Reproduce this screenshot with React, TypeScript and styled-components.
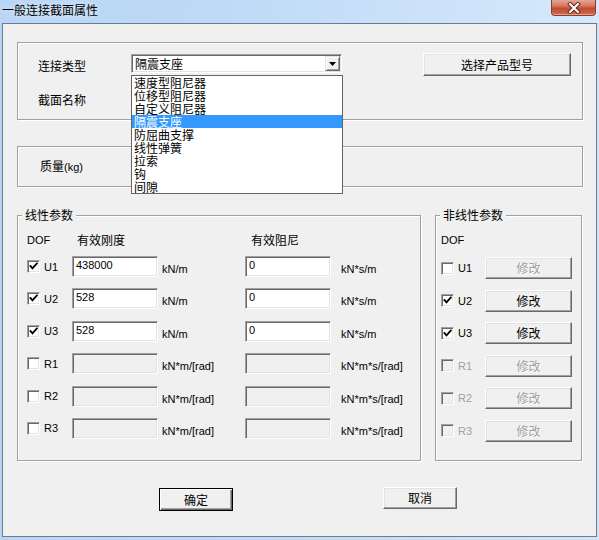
import React from 'react';
import styled, { createGlobalStyle } from 'styled-components';

const CJK = `"Noto Sans CJK SC", "Liberation Sans", sans-serif`;
const LAT = `"Liberation Sans", "Noto Sans CJK SC", sans-serif`;

const GlobalStyle = createGlobalStyle`
  html, body { margin: 0; padding: 0; background: #c3d9f1; }
  body { font-family: ${CJK}; }
`;

const Window = styled.div`
  width: 599px;
  height: 540px;
  display: flex;
  flex-direction: column;
  overflow: hidden;
  background: linear-gradient(90deg, #bad5f3 0%, #c6dcf5 55%, #d2e4f8 100%);
`;

const TitleBar = styled.div`
  height: 23px;
  flex: none;
  display: flex;
  align-items: flex-start;
  justify-content: space-between;
  background: linear-gradient(100deg, #b9d6f6 0%, #bed9f7 35%, #cfe4fa 80%, #d6e8fb 100%);
`;

const Title = styled.div`
  font: 12px/20px ${CJK};
  color: #000;
  padding-left: 2px;
  text-shadow: 0 0 6px rgba(255, 255, 255, 0.9);
`;

const CloseButton = styled.div`
  width: 45px;
  height: 16px;
  margin-right: 3px;
  box-sizing: border-box;
  border: 1px solid #8b3b2d;
  border-top: none;
  border-radius: 0 0 4px 4px;
  background: linear-gradient(180deg, #e6a595 0%, #d7765f 40%, #c24a30 55%, #cf6a4f 100%);
  box-shadow: inset 0 -1px 0 rgba(255, 200, 180, 0.6);
  display: flex;
  align-items: center;
  justify-content: center;
`;

const Client = styled.div`
  margin: 0 2px 3px 2px;
  flex: 1;
  border: 1px solid #6b7c8f;
  background: #f0f0f0;
  display: flex;
  flex-direction: column;
  padding-left: 14px;
  box-sizing: border-box;
`;

const Frame = styled.div<{ $w: number; $h: number; $mt: number }>`
  width: ${(p) => p.$w}px;
  height: ${(p) => p.$h}px;
  margin-top: ${(p) => p.$mt}px;
  box-sizing: border-box;
  border: 1px solid #a0a0a0;
  box-shadow: inset 1px 1px 0 #fff, 1px 1px 0 #fff;
  flex: none;
`;

const SectionFrame = styled(Frame)`
  display: flex;
  flex-direction: column;
  padding: 10px 11px 0 20px;
`;

const MassFrame = styled(Frame)`
  display: flex;
  align-items: center;
  padding-left: 22px;
  padding-bottom: 1px;
`;

const ParamFrame = styled(Frame)`
  display: flex;
  flex-direction: column;
`;

const Legend = styled.div<{ $pl: number }>`
  margin: -9px 0 0 4px;
  padding: 0 3px;
  width: fit-content;
  background: #f0f0f0;
  font: 12px/16px ${CJK};
  color: #000;
`;

const TopRow = styled.div`
  display: flex;
  align-items: flex-start;
`;

const FieldLabel = styled.div<{ $mt: number }>`
  width: 93px;
  margin-top: ${(p) => p.$mt}px;
  font: 12px/16px ${CJK};
  color: #000;
`;

const Small = styled.span`
  font: 11px ${LAT};
`;

const ComboWrap = styled.div`
  position: relative;
  width: 211px;
  height: 19px;
  margin-top: 1px;
`;

const Combo = styled.div`
  width: 100%;
  height: 100%;
  box-sizing: border-box;
  background: #fff;
  border: 1px solid;
  border-color: #a0a0a0 #fff #fff #a0a0a0;
  box-shadow: inset 1px 1px 0 #696969, inset -1px -1px 0 #e3e3e3;
  display: flex;
  align-items: center;
  justify-content: space-between;
  padding: 1px;
`;

const ComboText = styled.div`
  font: 12px/15px ${CJK};
  color: #000;
  padding-left: 2px;
`;

const ComboArrow = styled.div`
  width: 15px;
  height: 15px;
  box-sizing: border-box;
  background: #f0f0f0;
  border: 1px solid;
  border-color: #e3e3e3 #696969 #696969 #e3e3e3;
  box-shadow: inset 1px 1px 0 #fff, inset -1px -1px 0 #a0a0a0;
  display: flex;
  align-items: center;
  justify-content: center;
`;

const DropList = styled.div`
  position: absolute;
  left: 0;
  top: 21px;
  width: 212px;
  box-sizing: border-box;
  border: 1px solid #646464;
  background: #fff;
  z-index: 10;
`;

const DropItem = styled.div<{ $sel?: boolean }>`
  height: 13px;
  font: 12px/13px ${CJK};
  padding-left: 2px;
  white-space: nowrap;
  overflow: visible;
  color: ${(p) => (p.$sel ? '#fff' : '#000')};
  background: ${(p) => (p.$sel ? '#3399ff' : 'transparent')};
`;

const Spacer = styled.div`
  flex: 1;
`;

const PushButton = styled.div<{ $w: number; $h: number; $disabled?: boolean; $default?: boolean }>`
  width: ${(p) => p.$w}px;
  height: ${(p) => p.$h}px;
  box-sizing: border-box;
  background: #f0f0f0;
  border: 1px solid;
  border-color: ${(p) => (p.$default ? '#000' : '#fff #696969 #696969 #fff')};
  box-shadow: ${(p) =>
    p.$default
      ? 'inset 1px 1px 0 #fff, inset -1px -1px 0 #696969, inset -2px -2px 0 #a0a0a0'
      : 'inset -1px -1px 0 #a0a0a0, inset 1px 1px 0 #e3e3e3'};
  display: flex;
  align-items: center;
  justify-content: center;
  font: 12px/16px ${CJK};
  color: ${(p) => (p.$disabled ? '#a0a0a0' : '#000')};
  text-shadow: ${(p) => (p.$disabled ? '1px 1px 0 #fff' : 'none')};
  flex: none;
`;

const GroupsRow = styled.div`
  display: flex;
  gap: 14px;
  margin-top: 28px;
`;

const LIN_COLS = '17px 28px 86px 87px 86px auto';
const NL_COLS = '17px 27px 87px';

const HeaderGrid = styled.div<{ $cols: string }>`
  display: grid;
  grid-template-columns: ${(p) => p.$cols};
  margin-top: 9px;
  height: 16px;
  align-items: center;
`;

const HeadCell = styled.div<{ $span?: number; $pl?: number; $col?: number }>`
  grid-column: ${(p) => (p.$col ? `${p.$col} / span ${p.$span || 1}` : `span ${p.$span || 1}`)};
  padding-left: ${(p) => p.$pl || 0}px;
  font: 12px/16px ${CJK};
  color: #000;
  white-space: nowrap;
`;

const DofHead = styled(HeadCell)`
  font: 11px/16px ${LAT};
`;

const RowsGrid = styled.div<{ $cols: string; $rh: number; $gap: number; $mt: number }>`
  display: grid;
  grid-template-columns: ${(p) => p.$cols};
  grid-auto-rows: ${(p) => p.$rh}px;
  row-gap: ${(p) => p.$gap}px;
  margin-top: ${(p) => p.$mt}px;
  align-items: center;
`;

const LinBody = styled.div`
  padding-left: 9px;
`;

const NlBody = styled.div`
  padding-left: 5px;
`;

const CheckBox = styled.div<{ $disabled?: boolean }>`
  width: 13px;
  height: 13px;
  box-sizing: border-box;
  border: 1px solid;
  border-color: #a0a0a0 #fff #fff #a0a0a0;
  box-shadow: inset 1px 1px 0 #696969, inset -1px -1px 0 #e3e3e3;
  background: ${(p) => (p.$disabled ? '#f0f0f0' : '#fff')};
  display: flex;
  align-items: center;
  justify-content: center;
`;

const DofLabel = styled.div<{ $disabled?: boolean }>`
  font: 11px/14px ${LAT};
  color: ${(p) => (p.$disabled ? '#a0a0a0' : '#000')};
  padding-left: 0px;
`;

const TextBox = styled.div<{ $disabled?: boolean }>`
  width: 86px;
  height: 21px;
  box-sizing: border-box;
  border: 1px solid;
  border-color: #a0a0a0 #fff #fff #a0a0a0;
  box-shadow: inset 1px 1px 0 #696969, inset -1px -1px 0 #e3e3e3;
  background: ${(p) => (p.$disabled ? '#f0f0f0' : '#fff')};
  font: 11px/15px ${LAT};
  color: #000;
  padding: 1px 0 0 3px;
`;

const Unit = styled.div<{ $pl: number }>`
  padding-left: ${(p) => p.$pl}px;
  margin-top: 5px;
  font: 11px/14px ${LAT};
  color: #000;
  white-space: nowrap;
`;

const BottomRow = styled.div`
  display: flex;
  align-items: flex-start;
  margin-top: 26px;
  padding-left: 142px;
  gap: 150px;
`;

const DefaultWrap = styled.div`
  margin-top: 1px;
`;

const CheckMark = () => (
  <svg width="9" height="9" viewBox="0 0 9 9">
    <polyline points="1.5,4 3.5,6.3 7.8,1.5" fill="none" stroke="#000" strokeWidth="1.9" strokeLinecap="square" />
  </svg>
);

const CloseGlyph = () => (
  <svg width="14" height="12" viewBox="0 0 14 12">
    <path d="M3 2 L11 10 M11 2 L3 10" stroke="#5a2a22" strokeWidth="4" strokeLinecap="square" />
    <path d="M3 2 L11 10 M11 2 L3 10" stroke="#fff" strokeWidth="2" strokeLinecap="square" />
  </svg>
);

const DownArrow = () => (
  <svg width="7" height="4" viewBox="0 0 7 4">
    <polygon points="0,0 7,0 3.5,4" fill="#000" />
  </svg>
);

const options = ['速度型阻尼器', '位移型阻尼器', '自定义阻尼器', '隔震支座', '防屈曲支撑', '线性弹簧', '拉索', '钩', '间隙'];

const linear = [
  { dof: 'U1', checked: true, k: '438000', c: '0', ku: 'kN/m', cu: 'kN*s/m', off: false },
  { dof: 'U2', checked: true, k: '528', c: '0', ku: 'kN/m', cu: 'kN*s/m', off: false },
  { dof: 'U3', checked: true, k: '528', c: '0', ku: 'kN/m', cu: 'kN*s/m', off: false },
  { dof: 'R1', checked: false, k: '', c: '', ku: 'kN*m/[rad]', cu: 'kN*m*s/[rad]', off: true },
  { dof: 'R2', checked: false, k: '', c: '', ku: 'kN*m/[rad]', cu: 'kN*m*s/[rad]', off: true },
  { dof: 'R3', checked: false, k: '', c: '', ku: 'kN*m/[rad]', cu: 'kN*m*s/[rad]', off: true },
];

const nonlinear = [
  { dof: 'U1', checked: false, boxOff: false, btnOff: true },
  { dof: 'U2', checked: true, boxOff: false, btnOff: false },
  { dof: 'U3', checked: true, boxOff: false, btnOff: false },
  { dof: 'R1', checked: false, boxOff: true, btnOff: true },
  { dof: 'R2', checked: false, boxOff: true, btnOff: true },
  { dof: 'R3', checked: false, boxOff: true, btnOff: true },
];

export default function App() {
  return (
    <>
      <GlobalStyle />
      <Window>
        <TitleBar>
          <Title>一般连接截面属性</Title>
          <CloseButton>
            <CloseGlyph />
          </CloseButton>
        </TitleBar>
        <Client>
          <SectionFrame $w={566} $h={78} $mt={18}>
            <TopRow>
              <FieldLabel $mt={5}>连接类型</FieldLabel>
              <ComboWrap>
                <Combo>
                  <ComboText>隔震支座</ComboText>
                  <ComboArrow>
                    <DownArrow />
                  </ComboArrow>
                </Combo>
                <DropList>
                  {options.map((o) => (
                    <DropItem key={o} $sel={o === '隔震支座'}>
                      {o}
                    </DropItem>
                  ))}
                </DropList>
              </ComboWrap>
              <Spacer />
              <PushButton $w={148} $h={23}>选择产品型号</PushButton>
            </TopRow>
            <FieldLabel $mt={16}>截面名称</FieldLabel>
          </SectionFrame>

          <MassFrame $w={566} $h={41} $mt={26}>
            <FieldLabel $mt={0}>
              质量<Small>(kg)</Small>
            </FieldLabel>
          </MassFrame>

          <GroupsRow>
            <ParamFrame $w={404} $h={246} $mt={0}>
              <Legend $pl={0}>线性参数</Legend>
              <LinBody>
                <HeaderGrid $cols={LIN_COLS}>
                  <DofHead $span={2}>DOF</DofHead>
                  <HeadCell $pl={5}>有效刚度</HeadCell>
                  <HeadCell />
                  <HeadCell $pl={6} $span={2}>有效阻尼</HeadCell>
                </HeaderGrid>
                <RowsGrid $cols={LIN_COLS} $rh={21} $gap={11.4} $mt={8}>
                  {linear.map((r) => (
                    <React.Fragment key={r.dof}>
                      <CheckBox>{r.checked && <CheckMark />}</CheckBox>
                      <DofLabel>{r.dof}</DofLabel>
                      <TextBox $disabled={r.off}>{r.k}</TextBox>
                      <Unit $pl={4}>{r.ku}</Unit>
                      <TextBox $disabled={r.off}>{r.c}</TextBox>
                      <Unit $pl={10}>{r.cu}</Unit>
                    </React.Fragment>
                  ))}
                </RowsGrid>
              </LinBody>
            </ParamFrame>

            <ParamFrame $w={147} $h={246} $mt={0}>
              <Legend $pl={0}>非线性参数</Legend>
              <NlBody>
                <HeaderGrid $cols={NL_COLS}>
                  <DofHead $span={3}>DOF</DofHead>
                </HeaderGrid>
                <RowsGrid $cols={NL_COLS} $rh={22} $gap={10.5} $mt={9}>
                  {nonlinear.map((r) => (
                    <React.Fragment key={r.dof}>
                      <CheckBox $disabled={r.boxOff}>{r.checked && <CheckMark />}</CheckBox>
                      <DofLabel $disabled={r.boxOff}>{r.dof}</DofLabel>
                      <PushButton $w={87} $h={22} $disabled={r.btnOff}>修改</PushButton>
                    </React.Fragment>
                  ))}
                </RowsGrid>
              </NlBody>
            </ParamFrame>
          </GroupsRow>

          <BottomRow>
            <DefaultWrap>
              <PushButton $w={74} $h={23} $default>确定</PushButton>
            </DefaultWrap>
            <PushButton $w={74} $h={22}>取消</PushButton>
          </BottomRow>
        </Client>
      </Window>
    </>
  );
}
